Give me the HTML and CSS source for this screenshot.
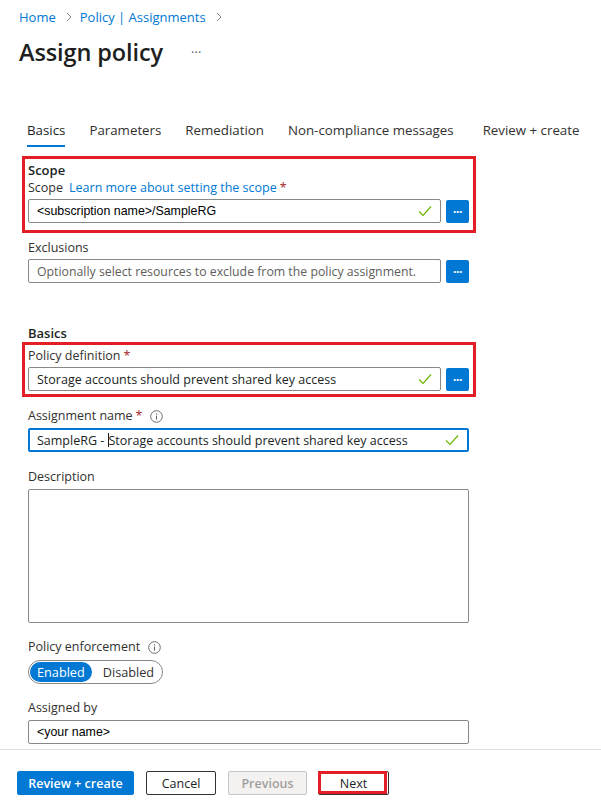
FILE: index.html
```html
<!DOCTYPE html>
<html lang="en">
<head>
<meta charset="utf-8">
<title>Assign policy</title>
<link rel="stylesheet" href="styles.css">
</head>
<body>
<div class="page">
  <nav class="breadcrumb">
    <a href="#">Home</a>
    <span class="chev"><svg width="8" height="10" viewBox="0 0 8 10"><path d="M2 1l4 4-4 4" fill="none" stroke="#8a8886" stroke-width="1"/></svg></span>
    <a href="#">Policy | Assignments</a>
    <span class="chev"><svg width="8" height="10" viewBox="0 0 8 10"><path d="M2 1l4 4-4 4" fill="none" stroke="#8a8886" stroke-width="1"/></svg></span>
  </nav>
  <header class="title-row">
    <h1 class="title">Assign policy</h1>
    <span class="more">···</span>
  </header>

  <div class="tabs">
    <span class="tab active">Basics</span>
    <span class="tab">Parameters</span>
    <span class="tab">Remediation</span>
    <span class="tab">Non-compliance messages</span>
    <span class="tab">Review + create</span>
  </div>

  <section class="form">
    <div class="highlight hl-scope">
      <div class="section-title">Scope</div>
      <div class="label">Scope <a class="link" href="#">Learn more about setting the scope</a> <span class="req">*</span></div>
      <div class="field-row">
        <div class="input narrow">
          <span class="value arial">&lt;subscription name&gt;/SampleRG</span>
          <svg class="check" width="14" height="12" viewBox="0 0 14 12"><path d="M1 6.5l4 4 8-9" fill="none" stroke="#6bb700" stroke-width="1.2"/></svg>
        </div>
        <button class="dots">...</button>
      </div>
    </div>

    <div class="group g-excl">
      <div class="label">Exclusions</div>
      <div class="field-row">
        <div class="input narrow"><span class="placeholder">Optionally select resources to exclude from the policy assignment.</span></div>
        <button class="dots">...</button>
      </div>
    </div>

    <div class="section-title basics">Basics</div>
    <div class="highlight hl-def">
      <div class="label">Policy definition <span class="req">*</span></div>
      <div class="field-row">
        <div class="input narrow">
          <span class="value">Storage accounts should prevent shared key access</span>
          <svg class="check" width="14" height="12" viewBox="0 0 14 12"><path d="M1 6.5l4 4 8-9" fill="none" stroke="#6bb700" stroke-width="1.2"/></svg>
        </div>
        <button class="dots">...</button>
      </div>
    </div>

    <div class="group g-name">
      <div class="label">Assignment name <span class="req">*</span> <svg class="info" width="13" height="13" viewBox="0 0 13 13"><circle cx="6.5" cy="6.5" r="5.8" fill="none" stroke="#605e5c" stroke-width="0.9"/><path d="M6.5 5.6v4" stroke="#605e5c" stroke-width="1"/><circle cx="6.5" cy="3.9" r="0.7" fill="#605e5c"/></svg></div>
      <div class="input wide focused">
        <span class="value">SampleRG - <span class="caret"></span>Storage accounts should prevent shared key access</span>
        <svg class="check" width="14" height="12" viewBox="0 0 14 12"><path d="M1 6.5l4 4 8-9" fill="none" stroke="#6bb700" stroke-width="1.2"/></svg>
      </div>
    </div>

    <div class="group g-desc">
      <div class="label">Description</div>
      <div class="textarea"></div>
    </div>

    <div class="group g-enf">
      <div class="label">Policy enforcement <svg class="info" width="13" height="13" viewBox="0 0 13 13"><circle cx="6.5" cy="6.5" r="5.8" fill="none" stroke="#605e5c" stroke-width="0.9"/><path d="M6.5 5.6v4" stroke="#605e5c" stroke-width="1"/><circle cx="6.5" cy="3.9" r="0.7" fill="#605e5c"/></svg></div>
      <div class="toggle">
        <span class="opt on">Enabled</span>
        <span class="opt">Disabled</span>
      </div>
    </div>

    <div class="group g-by">
      <div class="label">Assigned by</div>
      <div class="input wide"><span class="value arial">&lt;your name&gt;</span></div>
    </div>
  </section>
</div>

<footer class="footer">
  <button class="btn primary">Review + create</button>
  <button class="btn cancel">Cancel</button>
  <button class="btn disabled">Previous</button>
  <span class="next-wrap"><button class="btn next">Next</button></span>
</footer>
</body>
</html>
```

FILE: styles.css
```css
* { box-sizing: border-box; }
html, body { margin: 0; padding: 0; background: #fff; }
body {
  font-family: "Open Sans", "Noto Sans", sans-serif;
  font-size: 12.5px;
  color: #323130;
  width: 601px;
  height: 812px;
  overflow: hidden;
}
.page { padding-left: 19px; }
a { color: #0078d4; text-decoration: none; }

.breadcrumb {
  display: flex;
  align-items: center;
  height: 18px;
  margin-top: 8px;
  font-size: 13px;
}
.breadcrumb .chev { display: inline-flex; margin: 0 7px 0 9px; }

.title-row {
  display: flex;
  align-items: center;
  height: 32px;
  margin-top: 10px;
}
.title {
  margin: 0;
  font-size: 23.5px;
  font-weight: 600;
  letter-spacing: -0.1px;
  color: #201f1e;
}
.more { margin-left: 28px; font-size: 13px; color: #605e5c; }

.tabs {
  display: flex;
  margin-top: 51px;
  margin-left: 8px;
  height: 30px;
}
.tab {
  font-size: 13.3px;
  height: 28px;
  line-height: 22px;
  margin-right: 24px;
  color: #323130;
  white-space: nowrap;
}
.tab:nth-child(4) { margin-right: 29px; }
.tab.active { border-bottom: 2px solid #0078d4; color: #201f1e; }

.form { margin-top: 7px; width: 458px; }

.highlight {
  border: 3px solid #e31e24;
  margin-left: 3px;
  padding: 2px 3px 3px 3px;
  width: 454px;
}
.hl-scope { padding-bottom: 7px; }
.section-title { font-weight: 600; font-size: 13px; line-height: 18px; color: #201f1e; }
.section-title.basics { margin-left: 9px; margin-top: 41px; }

.label {
  display: flex;
  align-items: center;
  line-height: 18px;
  height: 18px;
  font-size: 12.5px;
}
.label .link { margin-left: 6px; }
.req { color: #a4262c; margin-left: 3px; }
.info { margin-left: 8px; }

.field-row { display: flex; align-items: center; margin-top: 2px; gap: 5px; }

.input {
  display: flex;
  align-items: center;
  height: 24px;
  border: 1px solid #8a8886;
  border-radius: 2px;
  padding: 0 8px 0 8px;
  font-size: 12.5px;
  white-space: nowrap;
  overflow: hidden;
}
.input.narrow { width: 413px; }
.input.wide { width: 441px; margin-top: 3px; }
.input .value { flex: 1; color: #201f1e; }
.input .value.arial { font-family: "Liberation Sans", Arial, sans-serif; font-size: 12.4px; color: #000; }
.input .placeholder { flex: 1; color: #605e5c; font-size: 12.3px; }
.input.focused { border: 2px solid #0078d4; padding-left: 7px; }
.caret { display: inline-block; width: 1px; height: 14px; background: #201f1e; vertical-align: -2px; }
.check { flex: none; margin-left: 6px; }

.dots {
  width: 23px;
  height: 23px;
  border: none;
  border-radius: 2px;
  background: #0078d4;
  color: #fff;
  font-family: inherit;
  font-size: 12px;
  font-weight: 700;
  line-height: 12px;
  padding: 0 0 4px 0;
  letter-spacing: -0.5px;
}

.group { margin-left: 9px; }
.g-excl { margin-top: 6px; }
.g-name { margin-top: 10px; }
.g-desc { margin-top: 16px; }
.g-enf { margin-top: 15px; }
.g-by { margin-top: 15px; }

.textarea {
  width: 441px;
  height: 134px;
  margin-top: 3px;
  border: 1px solid #8a8886;
  border-radius: 2px;
}

.toggle {
  display: inline-flex;
  align-items: center;
  margin-top: 4px;
  height: 24px;
  border: 1px solid #8a8886;
  border-radius: 12px;
  padding: 0 1px;
}
.opt {
  height: 20px;
  line-height: 20px;
  padding: 0 7px;
  border-radius: 10px;
  font-size: 12.7px;
  color: #323130;
}
.opt.on { background: #0078d4; color: #fff; margin-right: 4px; }

.footer {
  position: absolute;
  left: 0;
  top: 749px;
  width: 601px;
  border-top: 1px solid #e1dfdd;
  padding: 21px 0 0 17px;
  display: flex;
  gap: 12px;
  background: #fff;
}
.btn {
  height: 24px;
  padding: 0;
  border: 1px solid #323130;
  border-radius: 2px;
  background: #fff;
  font-family: inherit;
  font-size: 12.5px;
  font-weight: 600;
  color: #201f1e;
  white-space: nowrap;
}
.btn.primary { width: 117px; background: #0078d4; border-color: #0078d4; color: #fff; }
.btn.cancel { width: 70px; font-weight: 400; }
.btn.disabled { width: 79px; background: #f3f2f1; border-color: #c8c6c4; color: #a19f9d; }
.next-wrap { position: relative; display: inline-flex; margin-left: -1px; }
.btn.next { width: 71px; font-weight: 400; }
.next-wrap::after {
  content: "";
  position: absolute;
  left: 0;
  top: 0;
  right: 2px;
  bottom: 1px;
  border: 3px solid #e31e24;
  pointer-events: none;
}
```
